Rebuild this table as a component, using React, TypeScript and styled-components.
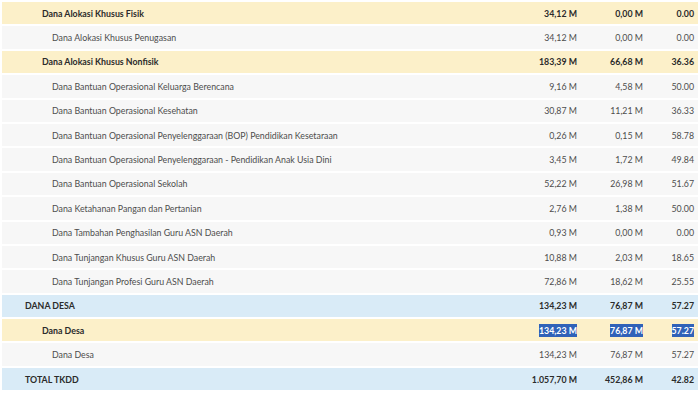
import styled, { createGlobalStyle, css } from 'styled-components'

const GlobalStyle = createGlobalStyle`
    html, body {
        margin: 0;
        padding: 0;
        background: #fff;
    }
    body {
        font-family: Lato, "Noto Sans", sans-serif;
    }
`

type Level = 0 | 1 | 2

const Table = styled.div`
    display: flex;
    flex-direction: column;
    gap: 2px;
    padding: 2px 2px 0 2px;
    width: 700px;
    height: 393px;
    box-sizing: border-box;
    overflow: hidden;
`

const Row = styled.div<{ $level: Level }>`
    display: grid;
    grid-template-columns: 1fr 80px 66px 51px;
    align-items: center;
    height: 22.4px;
    flex-shrink: 0;
    font-size: 8.8px;
    ${props => props.$level === 0 && css`
        background: #d9ebf7;
        color: #2b2b2b;
        font-weight: 700;
    `}
    ${props => props.$level === 1 && css`
        background: #fcf0c9;
        color: #2b2b2b;
        font-weight: 700;
    `}
    ${props => props.$level === 2 && css`
        background: #f7f7f7;
        color: #4d4d4d;
        font-weight: 400;
    `}
`

const Name = styled.div<{ $level: Level }>`
    padding-left: ${props => [23, 40, 50][props.$level]}px;
    white-space: nowrap;
`

const Num = styled.div`
    text-align: right;
    padding-right: 4px;
    white-space: nowrap;
`

const Picked = styled.span`
    background: #3062b8;
    color: #fff;
    padding: 1px 0;
`

type Item = {
    name: string
    level: Level
    pagu: string
    real: string
    pct: string
    picked?: boolean
}

const rows: Item[] = [
    { name: 'Dana Alokasi Khusus Fisik', level: 1, pagu: '34,12 M', real: '0,00 M', pct: '0.00' },
    { name: 'Dana Alokasi Khusus Penugasan', level: 2, pagu: '34,12 M', real: '0,00 M', pct: '0.00' },
    { name: 'Dana Alokasi Khusus Nonfisik', level: 1, pagu: '183,39 M', real: '66,68 M', pct: '36.36' },
    { name: 'Dana Bantuan Operasional Keluarga Berencana', level: 2, pagu: '9,16 M', real: '4,58 M', pct: '50.00' },
    { name: 'Dana Bantuan Operasional Kesehatan', level: 2, pagu: '30,87 M', real: '11,21 M', pct: '36.33' },
    { name: 'Dana Bantuan Operasional Penyelenggaraan (BOP) Pendidikan Kesetaraan', level: 2, pagu: '0,26 M', real: '0,15 M', pct: '58.78' },
    { name: 'Dana Bantuan Operasional Penyelenggaraan - Pendidikan Anak Usia Dini', level: 2, pagu: '3,45 M', real: '1,72 M', pct: '49.84' },
    { name: 'Dana Bantuan Operasional Sekolah', level: 2, pagu: '52,22 M', real: '26,98 M', pct: '51.67' },
    { name: 'Dana Ketahanan Pangan dan Pertanian', level: 2, pagu: '2,76 M', real: '1,38 M', pct: '50.00' },
    { name: 'Dana Tambahan Penghasilan Guru ASN Daerah', level: 2, pagu: '0,93 M', real: '0,00 M', pct: '0.00' },
    { name: 'Dana Tunjangan Khusus Guru ASN Daerah', level: 2, pagu: '10,88 M', real: '2,03 M', pct: '18.65' },
    { name: 'Dana Tunjangan Profesi Guru ASN Daerah', level: 2, pagu: '72,86 M', real: '18,62 M', pct: '25.55' },
    { name: 'DANA DESA', level: 0, pagu: '134,23 M', real: '76,87 M', pct: '57.27' },
    { name: 'Dana Desa', level: 1, pagu: '134,23 M', real: '76,87 M', pct: '57.27', picked: true },
    { name: 'Dana Desa', level: 2, pagu: '134,23 M', real: '76,87 M', pct: '57.27' },
    { name: 'TOTAL TKDD', level: 0, pagu: '1.057,70 M', real: '452,86 M', pct: '42.82' },
]

function Value({ text, picked }: { text: string; picked?: boolean }) {
    return <Num>{picked ? <Picked>{text}</Picked> : text}</Num>
}

export default function App() {
    return (
        <>
            <GlobalStyle />
            <Table>
                {rows.map((r, i) => (
                    <Row key={i} $level={r.level}>
                        <Name $level={r.level}>{r.name}</Name>
                        <Value text={r.pagu} picked={r.picked} />
                        <Value text={r.real} picked={r.picked} />
                        <Value text={r.pct} picked={r.picked} />
                    </Row>
                ))}
            </Table>
        </>
    )
}
